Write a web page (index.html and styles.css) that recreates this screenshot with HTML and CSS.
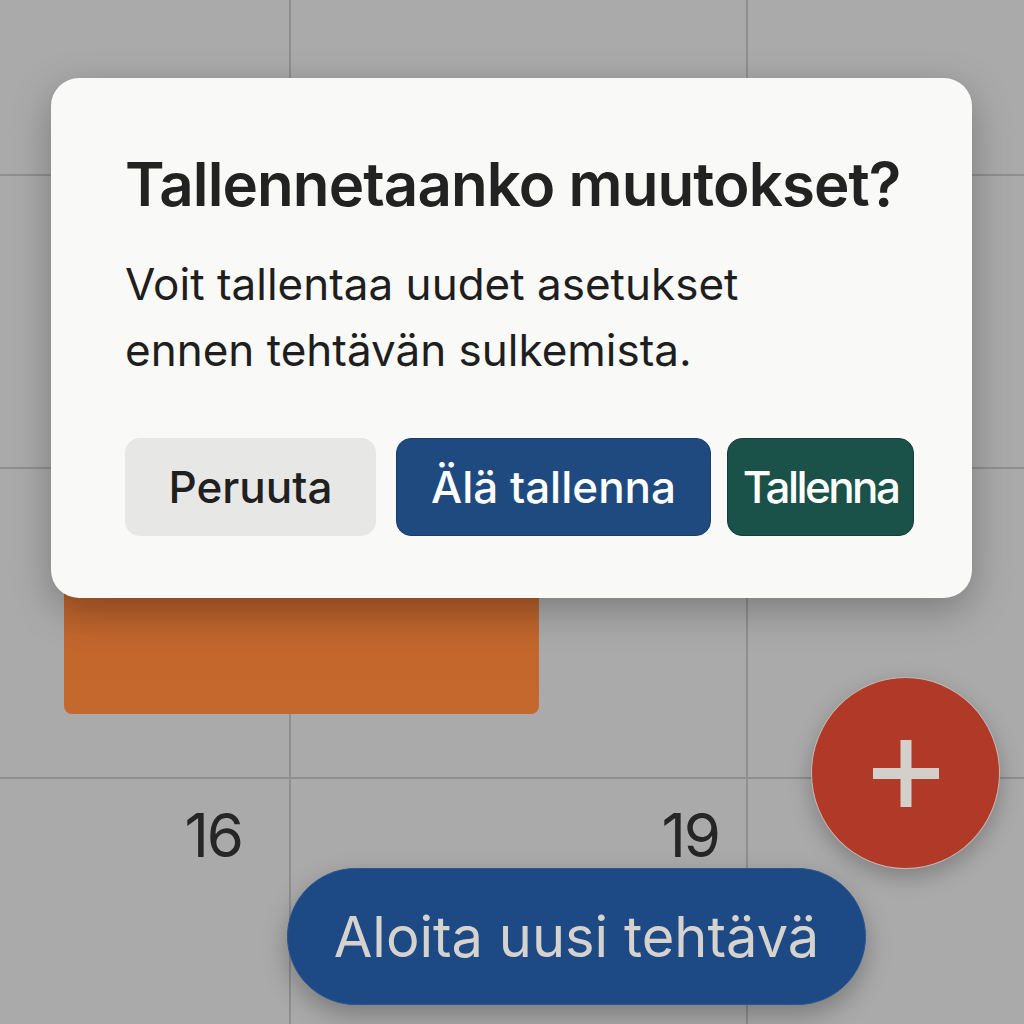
FILE: index.html
```html
<!DOCTYPE html>
<html lang="fi">
<head>
<meta charset="utf-8">
<title>Tallennetaanko muutokset?</title>
<link rel="stylesheet" href="styles.css">
</head>
<body>
<div class="screen">
  <div class="calendar">
    <div class="cell"></div>
    <div class="cell"></div>
    <div class="cell"></div>
    <div class="cell"></div>
    <div class="cell"></div>
    <div class="cell"></div>
    <div class="cell"></div>
    <div class="cell"></div>
    <div class="cell"></div>
    <div class="cell day day-a"><span class="num">16</span></div>
    <div class="cell day day-b"><span class="num">19</span></div>
    <div class="cell"></div>
  </div>

  <div class="event"></div>

  <div class="dialog" role="dialog">
    <h1 class="dialog-title">Tallennetaanko muutokset?</h1>
    <p class="dialog-text">Voit tallentaa uudet asetukset<br>ennen tehtävän sulkemista.</p>
    <div class="actions">
      <button class="btn btn-cancel">Peruuta</button>
      <button class="btn btn-discard">Älä tallenna</button>
      <button class="btn btn-save">Tallenna</button>
    </div>
  </div>

  <button class="fab" aria-label="Lisää">
    <svg width="66" height="67" viewBox="0 0 66 67"><path d="M33 0V67M0 33.5H66" stroke="#d3cfcb" stroke-width="11" fill="none"/></svg>
  </button>

  <button class="pill">Aloita uusi tehtävä</button>
</div>
</body>
</html>
```

FILE: styles.css
```css
html, body {
  margin: 0;
  padding: 0;
}

body {
  background: #aaaaaa;
  font-family: Inter, "Noto Sans", "Liberation Sans", sans-serif;
}

.screen {
  position: relative;
  width: 1024px;
  height: 1024px;
  overflow: hidden;
}

.calendar {
  display: grid;
  grid-template-columns: 289px 455px 1fr;
  grid-template-rows: 174px 291px 308px 1fr;
  gap: 2px;
  width: 1024px;
  height: 1024px;
  background: #8f8f8f;
}

.cell {
  background: #aaaaaa;
}

.day {
  display: flex;
  justify-content: flex-end;
  align-items: flex-start;
}

.num {
  font-size: 60px;
  line-height: 1;
  color: #262626;
  letter-spacing: -2px;
}

.day-a {
  padding: 26px 47px 0 0;
}

.day-b {
  padding: 26px 27px 0 0;
}

.event {
  position: absolute;
  left: 64px;
  top: 540px;
  width: 475px;
  height: 174px;
  border-radius: 8px;
  background: linear-gradient(#a9592a, #c2662d 55%, #c4682e);
}

.dialog {
  position: absolute;
  left: 51px;
  top: 78px;
  width: 921px;
  box-sizing: border-box;
  padding: 75px 50px 62px 74px;
  background: #f9f9f7;
  border-radius: 28px;
  box-shadow: 0 12px 40px rgba(0, 0, 0, 0.28);
}

.dialog-title {
  margin: 0;
  font-size: 60px;
  line-height: 62px;
  font-weight: 600;
  color: #222222;
  letter-spacing: -0.9px;
  white-space: nowrap;
}

.dialog-text {
  margin: 36px 0 0;
  font-size: 44px;
  line-height: 66px;
  font-weight: 400;
  color: #1e1e1e;
}

.actions {
  display: flex;
  margin-top: 55px;
}

.btn {
  height: 98px;
  border-radius: 15px;
  border: 1px solid transparent;
  font-family: Inter, "Noto Sans", "Liberation Sans", sans-serif;
  font-size: 44px;
  font-weight: 500;
  padding: 0;
  box-sizing: border-box;
}

.btn-cancel {
  width: 251px;
  background: #e7e7e5;
  color: #202020;
}

.btn-discard {
  width: 315px;
  margin-left: 20px;
  background: #1f4a80;
  border-color: #183c6c;
  color: #ffffff;
}

.btn-save {
  width: 187px;
  margin-left: 16px;
  background: #1a5148;
  border-color: #133f38;
  color: #ffffff;
  letter-spacing: -2.6px;
}

.fab {
  position: absolute;
  left: 811px;
  top: 677px;
  width: 189px;
  height: 192px;
  border-radius: 50%;
  background: #b03a27;
  border: 1px solid #c4b7b2;
  box-shadow: 0 8px 22px rgba(0, 0, 0, 0.25);
  display: flex;
  align-items: center;
  justify-content: center;
  padding: 0;
}

.pill {
  position: absolute;
  left: 287px;
  top: 868px;
  width: 579px;
  height: 137px;
  border-radius: 69px;
  border: 1px solid #2a5590;
  background: #1d4a84;
  color: #d6d2ce;
  font-family: Inter, "Noto Sans", "Liberation Sans", sans-serif;
  font-size: 56px;
  font-weight: 400;
  padding: 0;
  box-shadow: 0 10px 26px rgba(0, 0, 0, 0.28);
}
```
